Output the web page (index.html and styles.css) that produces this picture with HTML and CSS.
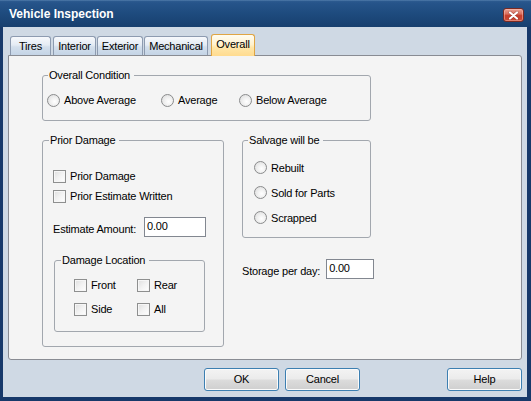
FILE: index.html
```html
<!DOCTYPE html>
<html>
<head>
<meta charset="utf-8">
<link rel="stylesheet" href="styles.css">
</head>
<body>
<div class="window">
  <div class="titlebar">
    <span class="title">Vehicle Inspection</span>
    <span class="close"><svg width="11" height="9" viewBox="0 0 11 9"><path d="M2 1.5 L9 7.5 M9 1.5 L2 7.5" stroke="#5a1510" stroke-width="3.2" stroke-linecap="round" opacity="0.35"/><path d="M2 1.5 L9 7.5 M9 1.5 L2 7.5" stroke="#ffffff" stroke-width="2.2" stroke-linecap="round"/></svg></span>
  </div>
  <div class="client">
    <div class="tabs">
      <div class="tab tab-tires">Tires</div>
      <div class="tab tab-interior">Interior</div>
      <div class="tab tab-exterior">Exterior</div>
      <div class="tab tab-mech">Mechanical</div>
      <div class="tab tab-overall selected">Overall</div>
    </div>
    <div class="panel">
      <div class="group g-overall">
        <div class="legend">Overall Condition</div>
        <div class="radio-row">
          <div class="opt"><span class="radio"></span>Above Average</div>
          <div class="opt"><span class="radio"></span>Average</div>
          <div class="opt"><span class="radio"></span>Below Average</div>
        </div>
      </div>
      <div class="columns">
        <div class="group g-prior">
          <div class="legend">Prior Damage</div>
          <div class="check-row first"><span class="check"></span>Prior Damage</div>
          <div class="check-row"><span class="check"></span>Prior Estimate Written</div>
          <div class="est-row"><span class="est-label">Estimate Amount:</span><span class="input est-input">0.00</span></div>
          <div class="group g-damage">
            <div class="legend">Damage Location</div>
            <div class="damage-grid">
              <div class="opt"><span class="check"></span>Front</div>
              <div class="opt"><span class="check"></span>Rear</div>
              <div class="opt"><span class="check"></span>Side</div>
              <div class="opt"><span class="check"></span>All</div>
            </div>
          </div>
        </div>
        <div class="col-right">
          <div class="group g-salvage">
            <div class="legend">Salvage will be</div>
            <div class="salvage-list">
              <div class="opt"><span class="radio"></span>Rebuilt</div>
              <div class="opt"><span class="radio"></span>Sold for Parts</div>
              <div class="opt"><span class="radio"></span>Scrapped</div>
            </div>
          </div>
          <div class="storage-row"><span class="storage-label">Storage per day:</span><span class="input storage-input">0.00</span></div>
        </div>
      </div>
    </div>
    <div class="buttons">
      <div class="btn">OK</div>
      <div class="btn">Cancel</div>
      <div class="btn btn-help">Help</div>
    </div>
  </div>
</div>
</body>
</html>
```
FILE: styles.css
```css
html, body {
  margin: 0;
  padding: 0;
}
body {
  width: 531px;
  height: 401px;
  overflow: hidden;
  font-family: "Liberation Sans", Arial, sans-serif;
  font-size: 11px;
  letter-spacing: -0.2px;
  color: #000;
}
.window {
  width: 531px;
  height: 401px;
  display: flex;
  flex-direction: column;
  background: #17396a;
}
.titlebar {
  height: 27px;
  flex: none;
  display: flex;
  align-items: flex-start;
  padding: 0 7px 0 9px;
  background: linear-gradient(#5c86b4 0, #2d5b8f 1px, #26548a 3px, #1e4b7e 50%, #173f6e 100%);
}
.title {
  flex: 1;
  color: #fff;
  font-weight: bold;
  font-size: 12px;
  letter-spacing: 0;
  line-height: 28px;
}
.close {
  margin-top: 8px;
  width: 21px;
  height: 14px;
  box-sizing: border-box;
  border: 1px solid #7a2a22;
  border-radius: 3px;
  background: linear-gradient(#e9a294 0, #d9705f 40%, #c53d2c 55%, #c94a35 100%);
  box-shadow: inset 0 0 0 1px rgba(255, 200, 190, 0.45);
  display: flex;
  align-items: center;
  justify-content: center;
}
.client {
  flex: 1;
  margin: 0 4px 4px 3px;
  padding: 7px 5px 0 5px;
  background: #cfd9e4;
  display: flex;
  flex-direction: column;
}
.tabs {
  height: 21px;
  display: flex;
  align-items: flex-end;
  margin-left: 2px;
}
.tab {
  height: 19px;
  box-sizing: border-box;
  border: 1px solid #8d9bb0;
  border-bottom: none;
  border-radius: 3px 3px 0 0;
  background: linear-gradient(#f7f9fc 0, #e4ebf4 45%, #d3dfec 55%, #c4d4e6 100%);
  text-align: center;
  line-height: 18px;
}
.tab-tires { width: 41px; margin-right: 2px; }
.tab-interior { width: 43px; margin-right: 1px; }
.tab-exterior { width: 46px; margin-right: 1px; }
.tab-mech { width: 64px; margin-right: 3px; }
.tab-overall { width: 44px; }
.tab.selected {
  height: 22px;
  margin-bottom: -1px;
  position: relative;
  z-index: 1;
  border-color: #e0a543;
  background: linear-gradient(#fffcf1 0, #fff2cf 45%, #ffe6a8 60%, #ffdb8f 100%);
  line-height: 18px;
}
.panel {
  height: 305px;
  box-sizing: border-box;
  border: 1px solid #898c93;
  border-radius: 0 3px 3px 3px;
  background: #f4f4f4;
  padding: 19px 0 0 33px;
}
.group {
  box-sizing: border-box;
  border: 1px solid #a2a7ae;
  border-radius: 3px;
}
.legend {
  display: table;
  margin-top: -7px;
  padding: 0 4px 0 1px;
  background: #f4f4f4;
  line-height: 13px;
}
.opt {
  display: flex;
  align-items: center;
  gap: 4px;
}
.radio {
  flex: none;
  width: 13px;
  height: 13px;
  box-sizing: border-box;
  border: 1px solid #8a8b8c;
  border-radius: 50%;
  background: radial-gradient(circle at 60% 60%, #ffffff 0, #f3f3f3 35%, #d9d9d9 100%);
}
.check {
  flex: none;
  width: 13px;
  height: 13px;
  box-sizing: border-box;
  border: 1px solid #8e8f8f;
  background: linear-gradient(135deg, #dedede 0, #f2f2f2 50%, #ffffff 100%);
  box-shadow: inset 0 0 0 1px #f6f6f6;
}
.g-overall {
  width: 329px;
  padding: 0 0 10px 4px;
}
.g-overall > .legend { margin-left: 1px; }
.radio-row {
  margin-top: 8px;
  height: 20px;
  display: grid;
  grid-template-columns: 114px 78px auto;
  align-items: center;
}
.columns {
  display: flex;
  gap: 18px;
  margin-top: 19px;
}
.g-prior {
  width: 182px;
  padding: 0 0 14px 10px;
}
.g-prior > .legend { margin-left: -4px; }
.check-row {
  height: 20px;
  display: flex;
  align-items: center;
  gap: 4px;
}
.check-row.first {
  margin-top: 19px;
}
.est-row {
  margin-top: 11px;
  height: 20px;
  display: flex;
  align-items: center;
}
.est-label {
  width: 91px;
  padding-top: 4px;
}
.input {
  box-sizing: border-box;
  height: 20px;
  border: 1px solid #828790;
  background: #fff;
  padding-left: 2px;
  line-height: 16px;
}
.est-input {
  width: 62px;
}
.g-damage {
  margin: 23px 0 0 1px;
  width: 151px;
  padding: 0 0 10px 19px;
}
.g-damage > .legend { margin-left: -13px; }
.damage-grid {
  margin-top: 6px;
  display: grid;
  grid-template-columns: 63px auto;
  grid-auto-rows: 24px;
  align-items: center;
}
.col-right {
  display: flex;
  flex-direction: column;
}
.g-salvage {
  width: 129px;
  padding: 0 0 7px 11px;
}
.g-salvage > .legend { margin-left: -6px; }
.salvage-list {
  margin-top: 8px;
  display: grid;
  grid-auto-rows: 25px;
  align-items: center;
}
.storage-row {
  margin-top: 21px;
  display: flex;
  align-items: center;
  gap: 6px;
}
.storage-label {
  padding-top: 4px;
}
.storage-input {
  width: 48px;
}
.buttons {
  display: flex;
  gap: 6px;
  margin-top: 8px;
  padding-left: 196px;
}
.btn {
  width: 75px;
  height: 23px;
  box-sizing: border-box;
  border: 1px solid #3c7fb1;
  border-radius: 3px;
  background: linear-gradient(#f3f3f3 0, #ebebeb 48%, #dcdcdc 52%, #cfcfcf 100%);
  box-shadow: inset 0 0 0 1px #fbfbfb;
  text-align: center;
  line-height: 21px;
}
.btn-help {
  margin-left: auto;
}
```
